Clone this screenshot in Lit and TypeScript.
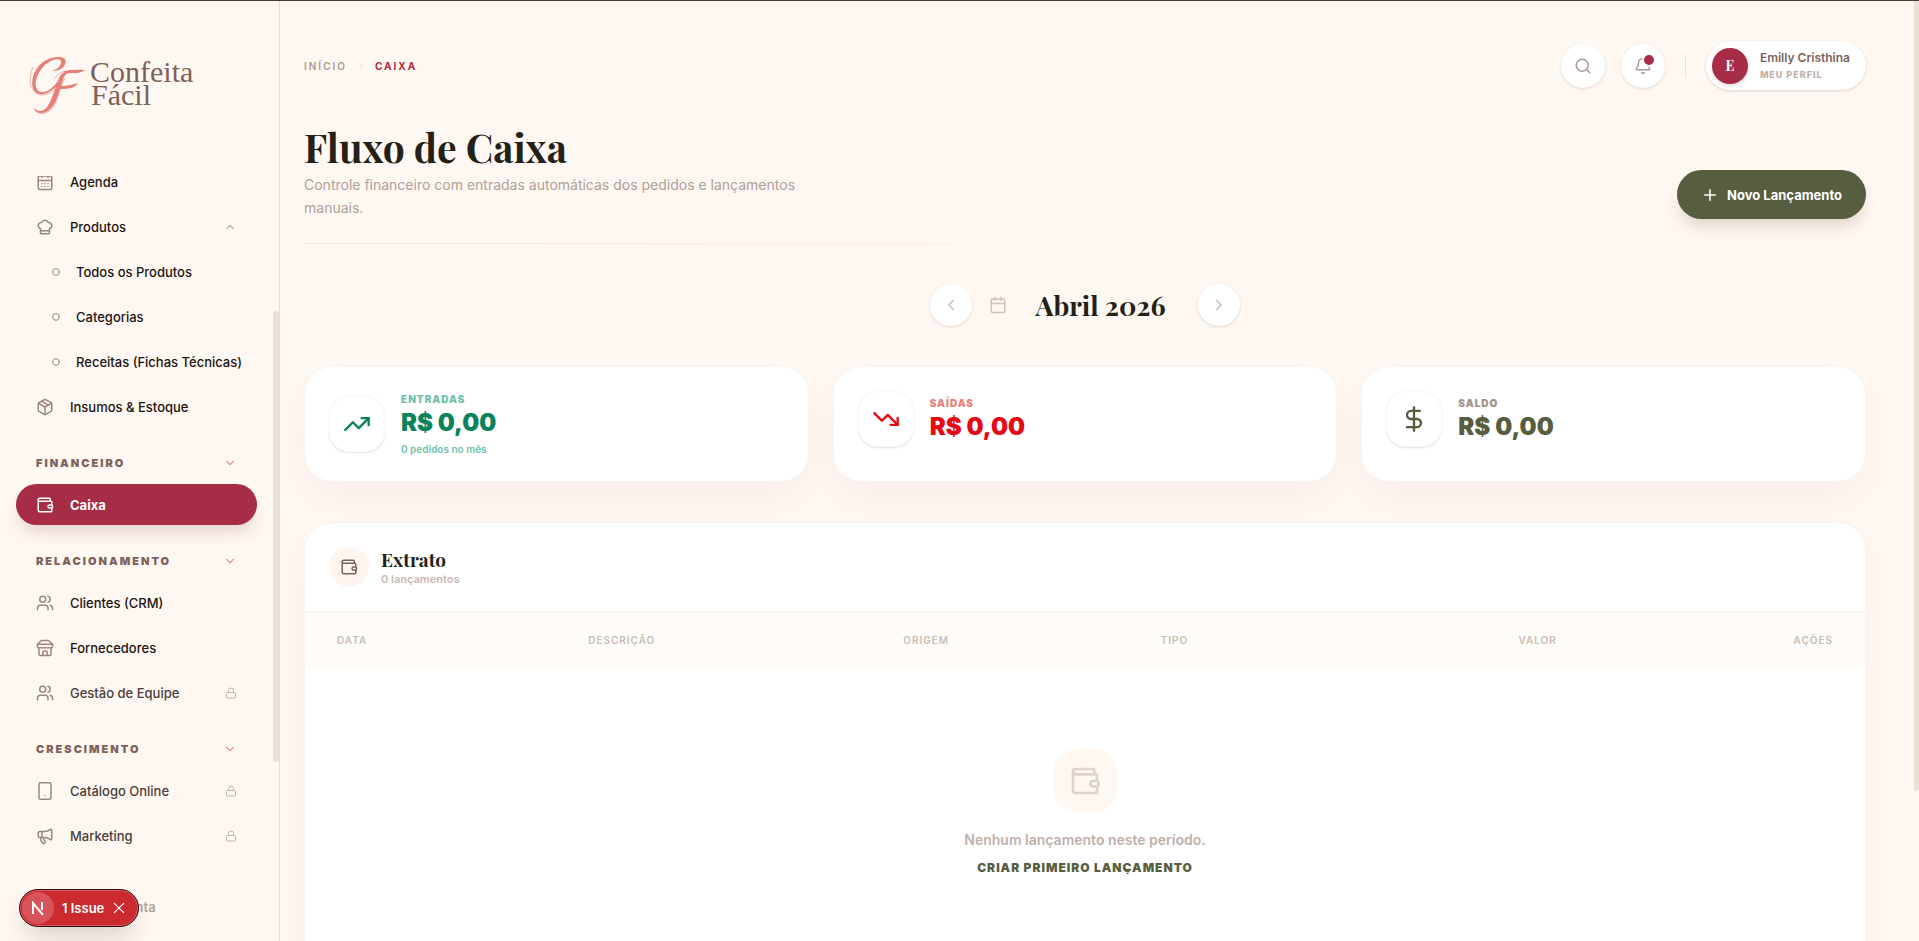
import { LitElement, html, css, svg, nothing } from "lit";
import { customElement, property } from "lit/decorators.js";

const glyphs: Record<string, unknown> = {
  calendarDays: svg`<path d="M8 2v4M16 2v4M3 10h18"/><rect x="3" y="4" width="18" height="18" rx="2"/><path d="M8 14h.01M12 14h.01M16 14h.01M8 18h.01M12 18h.01M16 18h.01"/>`,
  calendar: svg`<path d="M8 2v4M16 2v4M3 10h18"/><rect x="3" y="4" width="18" height="18" rx="2"/>`,
  chef: svg`<path d="M17 21a1 1 0 0 0 1-1v-5.35c0-.457.316-.844.727-1.041a4 4 0 0 0-2.134-7.589 5 5 0 0 0-9.186 0 4 4 0 0 0-2.134 7.588c.411.198.727.585.727 1.041V20a1 1 0 0 0 1 1Z"/><path d="M6 17h12"/>`,
  box: svg`<path d="M11 21.73a2 2 0 0 0 2 0l7-4A2 2 0 0 0 21 16V8a2 2 0 0 0-1-1.73l-7-4a2 2 0 0 0-2 0l-7 4A2 2 0 0 0 3 8v8a2 2 0 0 0 1 1.73z"/><path d="M12 22V12"/><path d="m3.3 7 8.7 5 8.7-5"/><path d="m7.5 4.27 9 5.15"/>`,
  wallet: svg`<path d="M19 7V4a1 1 0 0 0-1-1H5a2 2 0 0 0 0 4h15a1 1 0 0 1 1 1v4h-3a2 2 0 0 0 0 4h3a1 1 0 0 0 1-1v-2a1 1 0 0 0-1-1"/><path d="M3 5v14a2 2 0 0 0 2 2h15a1 1 0 0 0 1-1v-4"/>`,
  users: svg`<path d="M16 21v-2a4 4 0 0 0-4-4H6a4 4 0 0 0-4 4v2"/><circle cx="9" cy="7" r="4"/><path d="M22 21v-2a4 4 0 0 0-3-3.87"/><path d="M16 3.13a4 4 0 0 1 0 7.75"/>`,
  store: svg`<path d="m2 7 4.41-4.41A2 2 0 0 1 7.83 2h8.34a2 2 0 0 1 1.42.59L22 7"/><path d="M4 12v8a2 2 0 0 0 2 2h12a2 2 0 0 0 2-2v-8"/><path d="M15 22v-4a2 2 0 0 0-2-2h-2a2 2 0 0 0-2 2v4"/><path d="M2 7h20"/><path d="M22 7v3a2 2 0 0 1-2 2a2.7 2.7 0 0 1-1.59-.63.7.7 0 0 0-.82 0A2.7 2.7 0 0 1 16 12a2.7 2.7 0 0 1-1.59-.63.7.7 0 0 0-.82 0A2.7 2.7 0 0 1 12 12a2.7 2.7 0 0 1-1.59-.63.7.7 0 0 0-.82 0A2.7 2.7 0 0 1 8 12a2.7 2.7 0 0 1-1.59-.63.7.7 0 0 0-.82 0A2.7 2.7 0 0 1 4 12a2 2 0 0 1-2-2V7"/>`,
  tablet: svg`<rect x="4" y="1" width="16" height="22" rx="2"/><path d="M12 18h.01"/>`,
  megaphone: svg`<path d="M11 6a13 13 0 0 0 8.4-2.8A1 1 0 0 1 21 4v12a1 1 0 0 1-1.6.8A13 13 0 0 0 11 14H5a2 2 0 0 1-2-2V8a2 2 0 0 1 2-2z"/><path d="M6 14a12 12 0 0 0 2.4 7.2 2 2 0 0 0 3.2-2.4A8 8 0 0 1 10 14"/><path d="M8 6v8"/>`,
  lock: svg`<rect x="3" y="11" width="18" height="11" rx="2"/><path d="M7 11V7a5 5 0 0 1 10 0v4"/>`,
  up: svg`<path d="m18 15-6-6-6 6"/>`,
  down: svg`<path d="m6 9 6 6 6-6"/>`,
  left: svg`<path d="m15 18-6-6 6-6"/>`,
  right: svg`<path d="m9 18 6-6-6-6"/>`,
  ring: svg`<circle cx="12" cy="12" r="10"/>`,
  search: svg`<circle cx="11" cy="11" r="8"/><path d="m21 21-4.3-4.3"/>`,
  bell: svg`<path d="M10.268 21a2 2 0 0 0 3.464 0"/><path d="M3.262 15.326A1 1 0 0 0 4 17h16a1 1 0 0 0 .74-1.673C19.41 13.956 18 12.499 18 8A6 6 0 0 0 6 8c0 4.499-1.411 5.956-2.738 7.326"/>`,
  plus: svg`<path d="M5 12h14M12 5v14"/>`,
  close: svg`<path d="M20 4 4 20M4 4l16 16"/>`,
  trendUp: svg`<path d="M16 7h6v6"/><path d="m22 7-8.5 8.5-5-5L2 17"/>`,
  trendDown: svg`<path d="M16 17h6v-6"/><path d="m22 17-8.5-8.5-5 5L2 7"/>`,
  dollar: svg`<path d="M12 2v20"/><path d="M17 5H9.5a3.5 3.5 0 0 0 0 7h5a3.5 3.5 0 0 1 0 7H6"/>`,
};

const icon = (name: string, size = 18, stroke = 2) => svg`
  <svg class="icon" aria-hidden="true" width=${size} height=${size} viewBox="0 0 24 24" fill="none"
    stroke="currentColor" stroke-width=${stroke} stroke-linecap="round" stroke-linejoin="round">${glyphs[name]}</svg>`;

const base = css`
  *, *::before, *::after { box-sizing: border-box; }
  button { font: inherit; color: inherit; border: 0; background: none; padding: 0; cursor: pointer; }
  a { color: inherit; text-decoration: none; }
  .icon { display: block; flex: none; }
  h1, h2, p { margin: 0; }
`;

interface NavItem { label: string; icon: string; sub?: boolean; active?: boolean; locked?: boolean; open?: boolean; }
interface NavGroup { title?: string; items: NavItem[]; }

const groups: NavGroup[] = [
  { items: [
    { label: "Agenda", icon: "calendarDays" },
    { label: "Produtos", icon: "chef", open: true },
    { label: "Todos os Produtos", icon: "ring", sub: true },
    { label: "Categorias", icon: "ring", sub: true },
    { label: "Receitas (Fichas Técnicas)", icon: "ring", sub: true },
    { label: "Insumos & Estoque", icon: "box" },
  ] },
  { title: "Financeiro", items: [{ label: "Caixa", icon: "wallet", active: true }] },
  { title: "Relacionamento", items: [
    { label: "Clientes (CRM)", icon: "users" },
    { label: "Fornecedores", icon: "store" },
    { label: "Gestão de Equipe", icon: "users", locked: true },
  ] },
  { title: "Crescimento", items: [
    { label: "Catálogo Online", icon: "tablet", locked: true },
    { label: "Marketing", icon: "megaphone", locked: true },
  ] },
];

@customElement("side-bar")
class SideBar extends LitElement {
  static styles = [base, css`
    :host { display: flex; flex-direction: column; position: relative; box-sizing: border-box; width: 280px; flex: none; height: 100%; border-right: 1px solid #e8dcd8; }
    .brand { display: flex; height: 175px; padding: 52px 0 0 28px; flex: none; }
    .logo { width: 168px; height: 64px; overflow: visible; }
    .mark { fill: #e58078; stroke: none; }
    .echo { fill: none; stroke: #eeb5ab; stroke-width: 1; }
    .word { font-family: "Liberation Serif", serif; font-size: 30px; fill: #7d6159; }
    .nav { flex: 1; min-height: 0; overflow: hidden; padding: 0 22px 0 16px; }
    .group { display: flex; flex-direction: column; gap: 4px; }
    .group.first { margin-top: -15px; }
    .heading { display: flex; align-items: center; justify-content: space-between; width: 100%; height: 24px; margin: 24px 0 9px; padding: 0 20px;
      font-size: 11px; font-weight: 900; letter-spacing: 2px; text-transform: uppercase; color: #7d625b; }
    .heading .icon { color: #e39a9a; }
    .item { display: flex; align-items: center; gap: 16px; height: 41px; padding: 0 20px; border-radius: 21px; color: #1c1611; font-size: 13px; font-weight: 500; white-space: nowrap; }
    .item .lead { color: #9c8780; }
    .item .tail { margin-left: auto; color: #c4b3ae; }
    .item.sub { padding-left: 36px; }
    .item.locked { color: #4a403b; }
    .item.active { background: #a72c45; color: #fff; font-weight: 700; box-shadow: 0 10px 16px -4px rgba(90, 40, 40, .18); }
    .item.active .lead { color: #fff; }
    .slot { display: flex; width: 18px; justify-content: center; }
    .sub .slot { width: 8px; }
    .foot { flex: none; padding: 10px 22px 14px 16px; }
    .foot .item { color: #b5a29d; padding-left: 60px; font-weight: 600; }
    .thumb { position: absolute; right: 0; top: 33%; height: 48%; width: 6px; border-radius: 3px; background: #eae0d6; }
  `];

  item(i: NavItem) {
    return html`<a href="#" class="item ${i.sub ? "sub" : ""} ${i.active ? "active" : ""} ${i.locked ? "locked" : ""}">
      <span class="slot lead">${icon(i.icon, i.sub ? 8 : 18, i.sub ? 3 : 2)}</span>${i.label}
      ${i.open ? html`<span class="tail">${icon("up", 14)}</span>` : nothing}
      ${i.locked ? html`<span class="tail">${icon("lock", 12)}</span>` : nothing}
    </a>`;
  }

  render() {
    return html`
      <div class="brand">
        <svg class="logo" viewBox="0 0 168 64" role="img" aria-label="Confeita Fácil">
          <path class="echo" d="M5 14C0 25 1 41 14 42C22 42 27 37 30 33M7 57C12 63 22 61 27 51C31 43 32 33 37 25"/>
          <path class="mark" d="M24 18C29 17 34 12 33 8C31 4 21 7 15 14C6 24 5 38 14 39C20 39 26 34 29 29L30 31C26 37 19 42 12 41C2 40 2 24 10 14C18 4 32 2 37 6C40 12 32 19 24 18Z"/>
          <path class="mark" d="M26 27C29 18 39 16 57 17C52 21 47 20 42 20C38 20 36 23 35 27L33 33C39 33 43 32 50 30C47 35 41 36 32 36C29 47 24 60 13 60C8 60 6 57 6 55C10 59 15 59 19 54C25 46 27 34 31 25C32 22 34 20 37 19C32 19 29 22 26 27Z"/>
          <text class="word" x="62" y="29">Confeita</text>
          <text class="word" x="63" y="52">Fácil</text>
        </svg>
      </div>
      <nav class="nav">
        ${groups.map((g) => html`
          ${g.title ? html`<button class="heading">${g.title}${icon("down", 14)}</button>` : nothing}
          <div class="group ${g.title ? "" : "first"}">${g.items.map((i) => this.item(i))}</div>`)}
      </nav>
      <div class="foot"><a href="#" class="item">Minha Conta</a></div>
      <div class="thumb"></div>`;
  }
}

@customElement("summary-card")
class SummaryCard extends LitElement {
  @property() label = "";
  @property() value = "";
  @property() note = "";
  @property() icon = "";
  @property({ reflect: true }) tone = "";

  static styles = [base, css`
    :host { display: block; padding: 24px; border: 1px solid #f7f5f4; border-radius: 28px; background: #fff; box-shadow: 0 16px 36px -6px rgba(120, 70, 60, .06); }
    :host([tone="in"]) { --strong: #08835c; --soft: #73bfae; }
    :host([tone="out"]) { --strong: #e70814; --soft: #e5827b; }
    :host([tone="net"]) { --strong: #575e40; --soft: #a3918a; }
    .row { display: flex; align-items: center; gap: 16px; }
    .badge { display: grid; place-items: center; width: 56px; height: 56px; flex: none; border-radius: 20px; color: var(--strong); background: #fff;
      border: 1px solid #fbf8f6; box-shadow: 0 1px 2px rgba(60, 50, 40, .13); }
    .label { font-size: 10px; line-height: 16px; font-weight: 900; letter-spacing: 1px; text-transform: uppercase; color: var(--soft); }
    .value { font-size: 24px; line-height: 32px; font-weight: 900; color: var(--strong); }
    .note { margin-top: 2px; font-size: 10px; line-height: 16px; font-weight: 600; color: var(--soft); }
  `];

  render() {
    return html`<div class="row">
      <span class="badge">${icon(this.icon, 28)}</span>
      <div>
        <p class="label">${this.label}</p>
        <p class="value">${this.value}</p>
        ${this.note ? html`<p class="note">${this.note}</p>` : nothing}
      </div>
    </div>`;
  }
}

@customElement("app-root")
class AppRoot extends LitElement {
  static styles = [base, css`
    :host { display: flex; position: relative; height: 100vh; overflow: hidden; border-top: 1px solid #443b3b; background: #fff7f2; color: #241f17;
      font-family: Inter, "Liberation Sans", sans-serif; box-sizing: border-box; }
    .page { flex: 1; min-width: 0; padding: 40px 48px 0 24px; overflow: hidden; }
    .track { width: 5px; flex: none; }
    .grip { height: 84%; background: #eae0d6; border-radius: 0 0 3px 3px; }
    .serif { font-family: "Playfair Display", "Liberation Serif", serif; font-weight: 700; }

    .top { display: flex; align-items: center; justify-content: space-between; height: 49px; }
    .crumbs { display: flex; align-items: center; gap: 8px; font-size: 10px; font-weight: 600; letter-spacing: 2px; text-transform: uppercase; color: #ab9a95; }
    .crumbs .icon { color: #dccfca; }
    .crumbs .here { color: #b02741; font-weight: 700; }
    .tools { display: flex; align-items: center; gap: 16px; }
    .round { position: relative; display: grid; place-items: center; width: 44px; height: 44px; border-radius: 50%; background: #fff; color: #ab9a95; box-shadow: 0 1px 3px rgba(90, 50, 40, .16); }
    .dot { position: absolute; top: 9px; right: 9px; width: 14px; height: 14px; border-radius: 50%; background: #a72c45; border: 2px solid #fff; }
    .rule { width: 1px; height: 24px; margin: 0 4px; background: #eadfda; }
    .profile { display: flex; align-items: center; gap: 12px; height: 49px; padding: 0 16px 0 6px; border-radius: 25px; background: #fff; text-align: left; box-shadow: 0 1px 3px rgba(90, 50, 40, .18); }
    .avatar { display: grid; place-items: center; width: 36px; height: 36px; border-radius: 50%; background: #a72c45; color: #fff; font-size: 14px; box-shadow: 0 2px 4px rgba(90, 40, 40, .16); }
    .name { display: block; font-size: 12px; line-height: 18px; font-weight: 600; color: #7d625b; }
    .role { display: block; font-size: 9px; line-height: 16px; font-weight: 800; letter-spacing: 1px; text-transform: uppercase; color: #bfb0aa; }

    .intro { display: flex; align-items: flex-end; justify-content: space-between; padding: 31px 0 24px; }
    .title { font-size: 39px; line-height: 52px; }
    .lede { max-width: 512px; font-size: 14px; line-height: 23px; color: #b0a09b; }
    .primary { display: flex; align-items: center; gap: 8px; height: 49px; padding: 0 24px; border-radius: 25px; background: #575e40; color: #fff; font-size: 13px; font-weight: 700;
      box-shadow: 0 10px 16px -4px rgba(80, 60, 40, .2); }
    .fade { height: 1px; background: linear-gradient(90deg, #f3e8e3, #fff7f2 72%); }

    .month { display: flex; align-items: center; justify-content: center; padding: 40px 0; }
    .step { display: grid; place-items: center; width: 42px; height: 42px; border-radius: 50%; background: #fff; color: #c9bab4; box-shadow: 0 1px 3px rgba(90, 50, 40, .16); }
    .when { display: flex; align-items: center; gap: 28px; padding: 0 32px 0 17px; color: #cfc2bc; }
    .current { font-size: 27px; line-height: 36px; color: #241f17; }

    .cards { display: grid; grid-template-columns: repeat(3, 1fr); gap: 24px; }
    .ledger { margin-top: 40px; border: 1px solid #f7f5f4; border-radius: 28px; background: #fff; overflow: hidden; box-shadow: 0 16px 36px -6px rgba(120, 70, 60, .06); }
    .bar { display: flex; align-items: center; gap: 12px; padding: 24px; }
    .coin { display: grid; place-items: center; width: 40px; height: 40px; border-radius: 50%; background: #fff5f0; color: #7d625b; }
    .caption { font-size: 19px; line-height: 25px; }
    .count { font-size: 11px; line-height: 15px; font-weight: 600; color: #c7b9b4; }
    .table { width: 100%; table-layout: fixed; border-collapse: collapse; }
    .c1 { width: 16.1%; } .c2 { width: 20.2%; } .c3 { width: 16.5%; } .c4 { width: 12.5%; } .c5 { width: 17%; }
    .table th { height: 57px; padding: 0 32px; border-top: 1px solid #f5f2f0; background: #fffbf8; text-align: left; font-size: 10px; font-weight: 600; letter-spacing: 1px; text-transform: uppercase; color: #cbbdb8; }
    .table th.end { text-align: right; }
    .table td { padding: 80px 0 96px; }
    .empty { display: flex; flex-direction: column; align-items: center; }
    .tile { display: grid; place-items: center; width: 64px; height: 64px; border-radius: 24px; background: #fff7f2; color: #e0d3cb; }
    .hint { margin-top: 16px; font-size: 14px; line-height: 22px; font-weight: 600; color: #bfb0ab; }
    .create { margin-top: 8px; font-size: 12px; line-height: 18px; font-weight: 900; letter-spacing: 1px; text-transform: uppercase; color: #575e40; }

    .issue { position: absolute; left: 19px; bottom: 14px; display: flex; align-items: center; gap: 8px; height: 38px; padding: 0 12px 0 2px; border: 1px solid #2b1416; border-radius: 19px;
      background: #ca2a30; color: #fff; font-size: 13px; font-weight: 600; box-shadow: inset 0 0 0 1px #e0575c, 0 12px 24px -6px rgba(50, 40, 30, .22); }
    .next { display: grid; place-items: center; width: 32px; height: 32px; border-radius: 50%; background: #d9545a; }
  `];

  render() {
    return html`
      <side-bar></side-bar>
      <main class="page">
        <header class="top">
          <nav class="crumbs" aria-label="Navegação"><a href="#">Início</a>${icon("right", 12)}<span class="here">Caixa</span></nav>
          <div class="tools">
            <button class="round" aria-label="Buscar">${icon("search")}</button>
            <button class="round" aria-label="Notificações">${icon("bell")}<span class="dot"></span></button>
            <span class="rule"></span>
            <button class="profile">
              <span class="avatar serif">E</span>
              <span><span class="name">Emilly Cristhina</span><span class="role">Meu perfil</span></span>
            </button>
          </div>
        </header>

        <section class="intro">
          <div>
            <h1 class="title serif">Fluxo de Caixa</h1>
            <p class="lede">Controle financeiro com entradas automáticas dos pedidos e lançamentos manuais.</p>
          </div>
          <button class="primary">${icon("plus")}Novo Lançamento</button>
        </section>
        <div class="fade"></div>

        <div class="month">
          <button class="step" aria-label="Mês anterior">${icon("left")}</button>
          <div class="when">${icon("calendar")}<h2 class="current serif">Abril 2026</h2></div>
          <button class="step" aria-label="Próximo mês">${icon("right")}</button>
        </div>

        <section class="cards">
          <summary-card tone="in" icon="trendUp" label="Entradas" value="R$ 0,00" note="0 pedidos no mês"></summary-card>
          <summary-card tone="out" icon="trendDown" label="Saídas" value="R$ 0,00"></summary-card>
          <summary-card tone="net" icon="dollar" label="Saldo" value="R$ 0,00"></summary-card>
        </section>

        <section class="ledger">
          <div class="bar">
            <span class="coin">${icon("wallet")}</span>
            <div><h2 class="caption serif">Extrato</h2><p class="count">0 lançamentos</p></div>
          </div>
          <table class="table">
            <colgroup><col class="c1"><col class="c2"><col class="c3"><col class="c4"><col class="c5"><col></colgroup>
            <thead><tr><th>Data</th><th>Descrição</th><th>Origem</th><th>Tipo</th><th class="end">Valor</th><th class="end">Ações</th></tr></thead>
            <tbody><tr><td colspan="6"><div class="empty">
              <span class="tile">${icon("wallet", 32)}</span>
              <p class="hint">Nenhum lançamento neste período.</p>
              <button class="create">Criar primeiro lançamento</button>
            </div></td></tr></tbody>
          </table>
        </section>
      </main>
      <div class="track"><div class="grip"></div></div>
      <button class="issue">
        <span class="next"><svg class="icon" aria-hidden="true" width="14" height="14" viewBox="0 0 14 14" fill="none" stroke="#fff" stroke-width="2"><path d="M2 13V2l10 12M11 1v8"/></svg></span>
        1 Issue ${icon("close", 14)}
      </button>`;
  }
}
